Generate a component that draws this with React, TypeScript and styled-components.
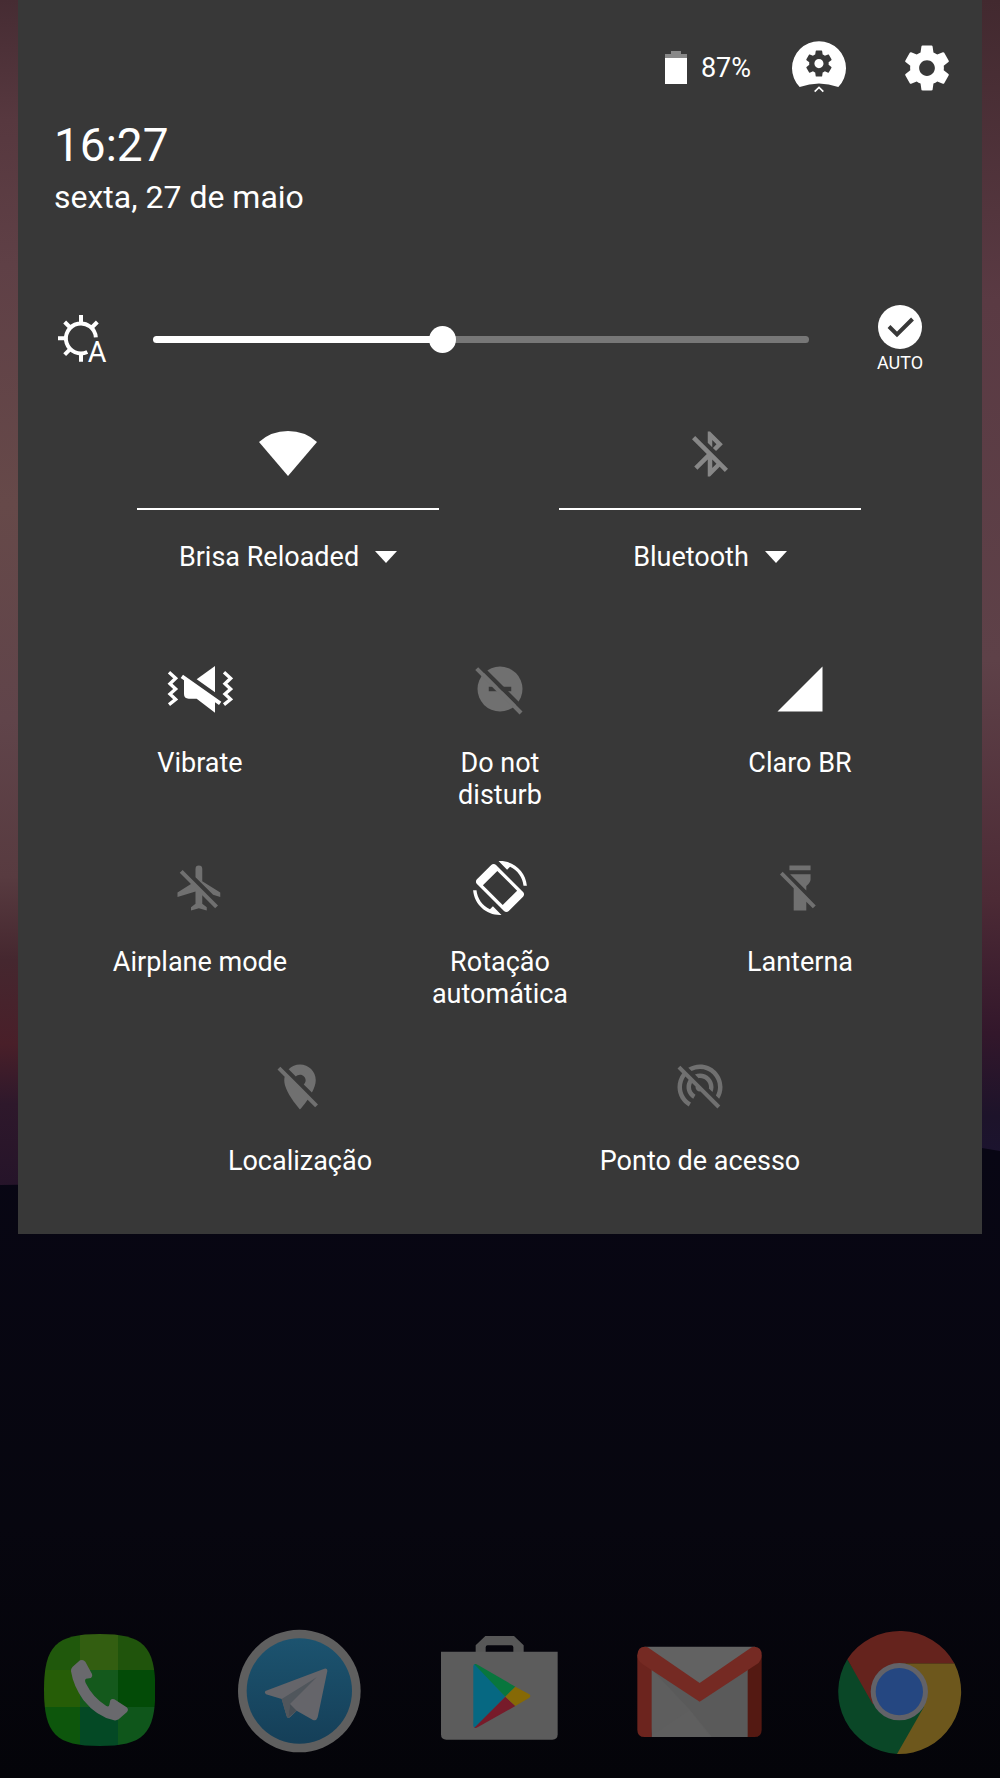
import React, { useState } from "react";
import styled, { createGlobalStyle } from "styled-components";

const GlobalStyle = createGlobalStyle`
  *, *::before, *::after { box-sizing: border-box; }
  body {
    margin: 0;
    background: #05040d;
    color: #fff;
    font-family: Roboto, "Noto Sans", sans-serif;
  }
  button { font: inherit; color: inherit; }
`;

const OFF = "#707070";
const PANEL = "#383838";

const Screen = styled.div`
  position: relative;
  isolation: isolate;
  min-height: 100vh;
  display: flex;
  flex-direction: column;
  justify-content: space-between;
`;

const WallpaperArt = styled.svg`
  position: absolute;
  inset: 0;
  width: 100%;
  height: 100%;
  z-index: -1;
`;

const Panel = styled.main`
  margin: 0 18px;
  padding: 41px 0 25px;
  background: ${PANEL};
`;

const IconButton = styled.button`
  display: flex;
  flex: none;
  padding: 0;
  border: 0;
  background: none;
  cursor: pointer;
`;

const StatusRow = styled.div`
  display: flex;
  justify-content: flex-end;
  align-items: center;
  gap: 54px;
  padding-right: 28px;
`;

const BatteryStatus = styled.div`
  display: flex;
  align-items: center;
  gap: 14px;
  margin-right: -13px;
  font-size: 27px;
  line-height: 34px;
`;

const Clock = styled.header`
  padding: 23px 36px 0;
`;

const Time = styled.div`
  font-size: 46px;
  line-height: 54px;
`;

const DateText = styled.div`
  margin-top: 7px;
  font-size: 32px;
  line-height: 36px;
`;

const BrightnessRow = styled.section`
  display: flex;
  align-items: center;
  margin-top: 90px;
  padding: 0 59px 0 40px;
`;

const Slider = styled.input`
  flex: 1;
  min-width: 0;
  height: 28px;
  margin: 0 68px 0 47px;
  appearance: none;
  background: none;
  cursor: pointer;

  &::-webkit-slider-runnable-track {
    height: 7px;
    border-radius: 4px;
    background: linear-gradient(to right, #fff var(--level), #777 var(--level));
  }
  &::-webkit-slider-thumb {
    appearance: none;
    width: 27px;
    height: 27px;
    margin-top: -10px;
    border-radius: 50%;
    background: #fff;
  }
`;

const AutoToggle = styled(IconButton)`
  flex-direction: column;
  align-items: center;
  gap: 4px;
  width: 46px;
  font-size: 18px;
  line-height: 20px;
`;

const SunIcon = styled.svg`
  flex: none;
  width: 48px;
  height: 48px;
  overflow: visible;
`;

const WideTiles = styled.section`
  display: grid;
  grid-template-columns: 1fr 1fr;
  gap: 120px;
  margin-top: 54px;
  padding: 0 121px 0 119px;
`;

const WideTile = styled.div`
  display: flex;
  flex-direction: column;
`;

const WideToggle = styled(IconButton)`
  justify-content: center;
  padding-bottom: 27px;
  border-bottom: 2px solid #fff;
`;

const DetailButton = styled(IconButton)`
  justify-content: center;
  align-items: center;
  gap: 16px;
  margin-top: 31px;
  font-size: 27px;
  line-height: 32px;
`;

const Tiles = styled.section`
  display: flex;
  flex-direction: column;
  gap: 50px;
  margin-top: 89px;
  padding: 0 32px;
`;

const TileRow = styled.div`
  display: flex;
  justify-content: space-evenly;
`;

const Tile = styled(IconButton)`
  flex: 0 1 300px;
  flex-direction: column;
  align-items: center;
  gap: 31px;
`;

const TileLabel = styled.span`
  min-height: 64px;
  font-size: 27px;
  line-height: 32px;
  text-align: center;
  white-space: pre-line;
`;

const Dock = styled.nav`
  display: flex;
  justify-content: space-around;
  padding-bottom: 23px;
`;

const AppIcon = styled.svg`
  display: block;
  width: 128px;
  height: 128px;
`;

const GEAR =
  "M19.43 12.98c.04-.32.07-.64.07-.98s-.03-.66-.07-.98l2.11-1.65c.19-.15.24-.42.12-.64l-2-3.46c-.12-.22-.39-.3-.61-.22l-2.49 1c-.52-.4-1.08-.73-1.69-.98l-.38-2.65C14.46 2.18 14.25 2 14 2h-4c-.25 0-.46.18-.49.42l-.38 2.65c-.61.25-1.17.59-1.69.98l-2.49-1c-.23-.09-.49 0-.61.22l-2 3.46c-.13.22-.07.49.12.64l2.11 1.65c-.04.32-.07.65-.07.98s.03.66.07.98l-2.11 1.65c-.19.15-.24.42-.12.64l2 3.46c.12.22.39.3.61.22l2.49-1c.52.4 1.08.73 1.69.98l.38 2.65c.03.24.24.42.49.42h4c.25 0 .46-.18.49-.42l.38-2.65c.61-.25 1.17-.59 1.69-.98l2.49 1c.23.09.49 0 .61-.22l2-3.46c.12-.22.07-.49-.12-.64l-2.11-1.65zM12 15.5c-1.93 0-3.5-1.57-3.5-3.5s1.57-3.5 3.5-3.5 3.5 1.57 3.5 3.5-1.57 3.5-3.5 3.5z";

const BLUETOOTH_OFF =
  "M13 5.83l1.88 1.88-1.6 1.6 1.41 1.41 3.02-3.02L12 2h-1v5.03l2 2v-3.2zM5.41 4L4 5.41 10.59 12 5 17.59 6.41 19 11 14.41V22h1l4.29-4.29 2.3 2.29L20 18.59 5.41 4zM13 18.17v-3.76l1.88 1.88L13 18.17z";

const AIRPLANE_OFF =
  "M13 9V3.5a1.5 1.5 0 0 0-3 0v3.68l7.83 7.83L21 16v-2l-8-5zM3 5.27l4.99 4.99L2 14v2l8-2.5V19l-2 1.5V22l3.5-1 3.5 1v-1.5L13 19v-3.73L18.73 21 20 19.73 4.27 4 3 5.27z";

const LOCATION_OFF =
  "M12 6.5c1.38 0 2.5 1.12 2.5 2.5 0 .74-.33 1.39-.83 1.85l3.63 3.63c.98-1.86 1.7-3.8 1.7-5.48 0-3.87-3.13-7-7-7-1.98 0-3.76.83-5.04 2.15l3.19 3.19c.46-.52 1.11-.84 1.85-.84zm4.37 9.6l-4.63-4.63-.11-.11L3.27 3 2 4.27l3.18 3.18C5.07 7.95 5 8.47 5 9c0 5.25 7 13 7 13s1.67-1.85 3.38-4.35L18.73 21 20 19.73l-3.63-3.63z";

const HOTSPOT_OFF =
  "M17.56 14.24c.28-.69.44-1.45.44-2.24 0-3.31-2.69-6-6-6-.79 0-1.55.16-2.24.44l1.62 1.62c.2-.03.41-.06.62-.06 2.21 0 4 1.79 4 4 0 .21-.02.42-.05.63l1.61 1.61zM12 4c4.42 0 8 3.58 8 8 0 1.35-.35 2.62-.95 3.74l1.47 1.47C21.46 15.69 22 13.91 22 12c0-5.52-4.48-10-10-10-1.91 0-3.69.55-5.21 1.47l1.46 1.46C9.37 4.34 10.65 4 12 4zM3.27 2.5L2 3.77l2.1 2.1C2.79 7.57 2 9.69 2 12c0 3.7 2.01 6.92 4.99 8.65l1-1.73C5.61 17.53 4 14.96 4 12c0-1.76.57-3.38 1.53-4.69l1.43 1.44C6.36 9.68 6 10.8 6 12c0 2.22 1.21 4.15 3 5.19l1-1.74c-1.19-.7-2-1.97-2-3.45 0-.65.17-1.25.44-1.79l1.58 1.58L10 12c0 1.1.9 2 2 2l.21-.02.01.01 7.51 7.51L21 20.23 4.27 3.5l-1-1z";

const ROTATION =
  "M16.48 2.52c3.27 1.55 5.61 4.72 5.97 8.48h1.5C23.44 4.84 18.29 0 12 0l-.66.03 3.81 3.81 1.33-1.32zm-6.25-.77c-.59-.59-1.54-.59-2.12 0L1.75 8.11c-.59.59-.59 1.54 0 2.12l12.02 12.02c.59.59 1.54.59 2.12 0l6.36-6.36c.59-.59.59-1.54 0-2.12L10.23 1.75zM10.8 4.4L4.4 10.8l8.8 8.8 6.4-6.4zM7.52 21.48C4.25 19.94 1.91 16.76 1.55 13H.05C.56 19.16 5.71 24 12 24l.66-.03-3.81-3.81-1.33 1.32z";

const FLASHLIGHT_OFF =
  "M7.3 2h9.4v2.1H7.3zM7.6 5.9h9.1v2.3q0 1.2-1.9 2.9v2zM4.3 4.8L3.1 6l6.1 6.1V22h5.6v-3.9l2.9 2.9L19 19.8z";

interface GlyphProps {
  path: string;
  color?: string;
}

const Glyph = ({ path, color = "#fff" }: GlyphProps) => (
  <svg width="54" height="54" viewBox="0 0 24 24" fill={color} fillRule="evenodd" aria-hidden="true">
    <path d={path} />
  </svg>
);

const BatteryIcon = () => (
  <svg width="22" height="34" viewBox="0 0 22 34" aria-hidden="true">
    <path d="M0 3h6V0h10v3h6v5H0z" fill="#888" />
    <path d="M0 7h22v26H0z" fill="#fff" />
  </svg>
);

const UserIcon = () => (
  <svg width="54" height="54" viewBox="0 0 162 162" aria-hidden="true">
    <path d="M23 138A81 81 0 1 1 139 138Q81 117 23 138Z" fill="#fff" />
    <path d={GEAR} fill={PANEL} transform="translate(34 21) scale(3.9)" />
    <path d="M68 152l13-13 13 13" fill="none" stroke="#fff" strokeWidth="5" />
  </svg>
);

const BrightnessIcon = () => (
  <SunIcon viewBox="0 0 144 144" aria-hidden="true">
    <path
      d="M113.500 67A45 45 0 1 0 88 111M69 0v22M0 70h22M69 116v24M20 21l18 18M118 21l-18 18M20 119l18-18"
      fill="none"
      stroke="#fff"
      strokeWidth="12"
    />
    <text x="89" y="140" fontSize="86" fontFamily="Roboto, sans-serif" fill="#fff">
      A
    </text>
  </SunIcon>
);

const CheckIcon = () => (
  <svg width="44" height="44" viewBox="0 0 44 44" aria-hidden="true">
    <circle cx="22" cy="22" r="22" fill="#fff" />
    <path d="M11 21.500l8 8L34.500 14" fill="none" stroke={PANEL} strokeWidth="4" />
  </svg>
);

const WifiIcon = () => (
  <svg width="58" height="54" viewBox="0 0 58 54" aria-hidden="true">
    <path d="M0 15Q12 4 29 4T58 15L29 49z" fill="#fff" />
  </svg>
);

const CaretIcon = () => (
  <svg width="22" height="12" viewBox="0 0 22 12" aria-hidden="true">
    <path d="M0 0h22L11 12z" fill="#fff" />
  </svg>
);

const VibrateIcon = () => (
  <svg width="66" height="54" viewBox="0 0 198 162" fill="#fff" aria-hidden="true">
    <path
      d="M6 31L26 49 9 65 26 81 9 96 26 112 6 128M171 31l20 18-17 16 17 16-17 15 17 16-20 16"
      fill="none"
      stroke="#fff"
      strokeWidth="10"
    />
    <path d="M144 12v79L89 52z" />
    <path d="M48 38L163 119l-7 10-12-8v31L89 110H65Q51 110 51 96V55l-10-7z" />
  </svg>
);

const DoNotDisturbIcon = () => (
  <svg width="54" height="54" viewBox="0 0 24 24" fill={OFF} aria-hidden="true">
    <mask id="dnd-gap">
      <path d="M0 0h24v24H0z" fill="#fff" />
      <path d="M7 11h10v2H7z" fill="#000" />
      <path d="M0-1.300L24 22.700" stroke="#000" strokeWidth="1.900" />
    </mask>
    <circle cx="12" cy="12" r="10" mask="url(#dnd-gap)" />
    <path d="M1 3.600l1.300-1.300L22 22l-1.300 1.300z" />
  </svg>
);

const SignalIcon = () => (
  <svg width="54" height="54" viewBox="0 0 24 24" fill="#fff" aria-hidden="true">
    <path d="M2 22h20V2z" />
  </svg>
);

const Wallpaper = () => (
  <WallpaperArt viewBox="0 0 1000 1778" preserveAspectRatio="none" aria-hidden="true">
    <defs>
      <linearGradient id="sky" x1="0" y1="0" x2="0" y2="1200" gradientUnits="userSpaceOnUse">
        <stop offset="0" stopColor="#462c33" />
        <stop offset=".1" stopColor="#57383f" />
        <stop offset=".22" stopColor="#5f4046" />
        <stop offset=".42" stopColor="#664949" />
        <stop offset=".6" stopColor="#60444a" />
        <stop offset=".73" stopColor="#583b40" />
        <stop offset=".8" stopColor="#45272f" />
        <stop offset=".87" stopColor="#491f29" />
        <stop offset=".92" stopColor="#2e182b" />
        <stop offset="1" stopColor="#241329" />
      </linearGradient>
      <linearGradient id="dusk" x1="0" y1="0" x2="0" y2="1200" gradientUnits="userSpaceOnUse">
        <stop offset="0" stopColor="#42292f" />
        <stop offset=".25" stopColor="#5a3a43" />
        <stop offset=".55" stopColor="#5e4148" />
        <stop offset=".75" stopColor="#4c2a35" />
        <stop offset=".86" stopColor="#33172b" />
        <stop offset=".93" stopColor="#1d132a" />
        <stop offset="1" stopColor="#1a1434" />
      </linearGradient>
      <linearGradient id="ground" x1="0" y1="0" x2="0" y2="1">
        <stop offset="0" stopColor="#080614" />
        <stop offset=".6" stopColor="#07060f" />
        <stop offset="1" stopColor="#040409" />
      </linearGradient>
    </defs>
    <path d="M0 0h500v1200H0z" fill="url(#sky)" />
    <path d="M500 0h500v1200H500z" fill="url(#dusk)" />
    <path d="M0 1185Q500 1180 982 1148L1000 1151V1778H0z" fill="url(#ground)" />
  </WallpaperArt>
);

const PhoneApp = () => (
  <AppIcon viewBox="108 81 384 384" role="img" aria-label="Telefone">
    <clipPath id="phone-shape">
      <path d="M299 102C430 102 466 138 466 270S430 438 299 438 132 402 132 270 168 102 299 102Z" />
    </clipPath>
    <g clipPath="url(#phone-shape)" shapeRendering="crispEdges">
      <path d="M132 102h108v109H132z" fill="#20580c" />
      <path d="M240 102h115v109H240z" fill="#335e11" />
      <path d="M355 102h111v109H355z" fill="#20540c" />
      <path d="M132 211h108v109H132z" fill="#265d07" />
      <path d="M240 211h115v109H240z" fill="#14591c" />
      <path d="M355 211h111v109H355z" fill="#034b07" />
      <path d="M132 320h108v118H132z" fill="#0d560c" />
      <path d="M240 320h115v118H240z" fill="#044925" />
      <path d="M355 320h111v118H355z" fill="#0f561b" />
    </g>
    <path
      d="M240 181Q250 177 256 185L276 222Q279 230 273 234L258 236Q253 239 257 249 278 292 319 318 327 322 328 314L331 301Q335 295 343 298L380 322Q387 328 381 336L356 358Q350 362 342 361 290 350 250 300 220 258 213 214 212 206 218 200Z"
      fill="#69696d"
    />
  </AppIcon>
);

const TelegramApp = () => (
  <AppIcon viewBox="708 81 384 384" role="img" aria-label="Telegram">
    <linearGradient id="telegram-blue" x1="0" y1="0" x2="0" y2="1">
      <stop offset="0" stopColor="#1c536f" />
      <stop offset="1" stopColor="#153f58" />
    </linearGradient>
    <circle cx="898" cy="273" r="184" fill="#5f5f5f" />
    <circle cx="898" cy="273" r="158" fill="url(#telegram-blue)" />
    <path d="M796 273L973 206Q983 203 982 213L953 352Q949 364 939 360L890 332 870 352Q863 357 860 349L845 297 798 283Q792 278 796 273Z" fill="#65656a" />
    <path d="M845 297L950 232 870 312 864 354 860 349Z" fill="#50565c" />
    <path d="M870 312L890 332 864 354Z" fill="#474e55" />
  </AppIcon>
);

const PlayStoreApp = () => (
  <AppIcon viewBox="1308 81 384 384" role="img" aria-label="Play Store">
    <path d="M1427 156V136L1456 108H1542L1571 136V156H1540V142Q1540 136 1534 136H1463Q1457 136 1457 142V156Z" fill="#575757" />
    <path d="M1323 155H1673V403Q1673 419 1657 419H1339Q1323 419 1323 403Z" fill="#5c5c5c" />
    <path d="M1420 198V378Q1421 384 1427 383L1516 290 1427 192Q1420 192 1420 198Z" fill="#066882" />
    <path d="M1423 193Q1427 191 1434 195L1546 260 1516 290Z" fill="#08763d" />
    <path d="M1423 383Q1427 385 1434 381L1546 318 1516 290Z" fill="#771b2a" />
    <path d="M1546 260L1588 283Q1594 288 1588 293L1546 318 1516 290Z" fill="#866906" />
  </AppIcon>
);

const GmailApp = () => (
  <AppIcon viewBox="408 81 384 384" role="img" aria-label="Gmail">
    <path d="M434 140H764L743 411H455Z" fill="#626262" />
    <path d="M455 205L599 300 743 205V411H455Z" fill="#5e5e5e" />
    <path d="M455 208L599 305 743 208V411H636L570 330Z" fill="#5a5a5a" />
    <path d="M455 406L570 330 632 411H455Z" fill="#5f5f5f" />
    <path d="M412 164L455 190V411H434Q412 411 412 389Z" fill="#6c241e" />
    <path d="M785 164L743 190V411H763Q785 411 785 389Z" fill="#541912" />
    <path d="M412 164Q414 140 434 140L443 142 599 249 755 142 764 140Q785 142 785 164 785 183 770 193L599 305 428 193Q412 182 412 164Z" fill="#752a23" />
  </AppIcon>
);

const ChromeApp = () => (
  <AppIcon viewBox="1008 81 384 384" role="img" aria-label="Chrome">
    <path d="M1363 190A187 187 0 0 1 1191 462L1199 275V190Z" fill="#6d571c" />
    <path d="M1042 178A187 187 0 0 0 1191 462L1272 320 1199 275 1117 300Z" fill="#0a4727" />
    <path d="M1042 178A187 187 0 0 1 1363 190H1199V275L1118 312Z" fill="#65231d" />
    <circle cx="1198" cy="275" r="86" fill="#626268" />
    <circle cx="1198" cy="275" r="71" fill="#254781" />
  </AppIcon>
);

interface TileData {
  label: string;
  icon: React.ReactNode;
  on: boolean;
}

const tileRows: TileData[][] = [
  [
    { label: "Vibrate", icon: <VibrateIcon />, on: true },
    { label: "Do not\ndisturb", icon: <DoNotDisturbIcon />, on: false },
    { label: "Claro BR", icon: <SignalIcon />, on: true },
  ],
  [
    { label: "Airplane mode", icon: <Glyph path={AIRPLANE_OFF} color={OFF} />, on: false },
    { label: "Rotação\nautomática", icon: <Glyph path={ROTATION} />, on: true },
    { label: "Lanterna", icon: <Glyph path={FLASHLIGHT_OFF} color={OFF} />, on: false },
  ],
  [
    { label: "Localização", icon: <Glyph path={LOCATION_OFF} color={OFF} />, on: false },
    { label: "Ponto de acesso", icon: <Glyph path={HOTSPOT_OFF} color={OFF} />, on: false },
  ],
];

export default function App() {
  const [brightness, setBrightness] = useState(112);
  const level = { "--level": `${(brightness / 255) * 100}%` } as React.CSSProperties;

  return (
    <Screen>
      <GlobalStyle />
      <Wallpaper />
      <Panel>
        <StatusRow>
          <BatteryStatus>
            <BatteryIcon />
            87%
          </BatteryStatus>
          <IconButton aria-label="Usuário">
            <UserIcon />
          </IconButton>
          <IconButton aria-label="Configurações">
            <Glyph path={GEAR} />
          </IconButton>
        </StatusRow>
        <Clock>
          <Time>16:27</Time>
          <DateText>sexta, 27 de maio</DateText>
        </Clock>
        <BrightnessRow>
          <BrightnessIcon />
          <Slider
            type="range"
            aria-label="Brilho"
            min={0}
            max={255}
            value={brightness}
            style={level}
            onChange={(event) => setBrightness(Number(event.target.value))}
          />
          <AutoToggle aria-pressed="true">
            <CheckIcon />
            AUTO
          </AutoToggle>
        </BrightnessRow>
        <WideTiles>
          <WideTile>
            <WideToggle aria-label="Wi-Fi" aria-pressed="true">
              <WifiIcon />
            </WideToggle>
            <DetailButton>
              Brisa Reloaded
              <CaretIcon />
            </DetailButton>
          </WideTile>
          <WideTile>
            <WideToggle aria-label="Bluetooth" aria-pressed="false">
              <Glyph path={BLUETOOTH_OFF} color="#878787" />
            </WideToggle>
            <DetailButton>
              Bluetooth
              <CaretIcon />
            </DetailButton>
          </WideTile>
        </WideTiles>
        <Tiles>
          {tileRows.map((row, index) => (
            <TileRow key={index}>
              {row.map((tile) => (
                <Tile key={tile.label} aria-pressed={tile.on}>
                  {tile.icon}
                  <TileLabel>{tile.label}</TileLabel>
                </Tile>
              ))}
            </TileRow>
          ))}
        </Tiles>
      </Panel>
      <Dock aria-label="Aplicativos">
        <IconButton>
          <PhoneApp />
        </IconButton>
        <IconButton>
          <TelegramApp />
        </IconButton>
        <IconButton>
          <PlayStoreApp />
        </IconButton>
        <IconButton>
          <GmailApp />
        </IconButton>
        <IconButton>
          <ChromeApp />
        </IconButton>
      </Dock>
    </Screen>
  );
}
